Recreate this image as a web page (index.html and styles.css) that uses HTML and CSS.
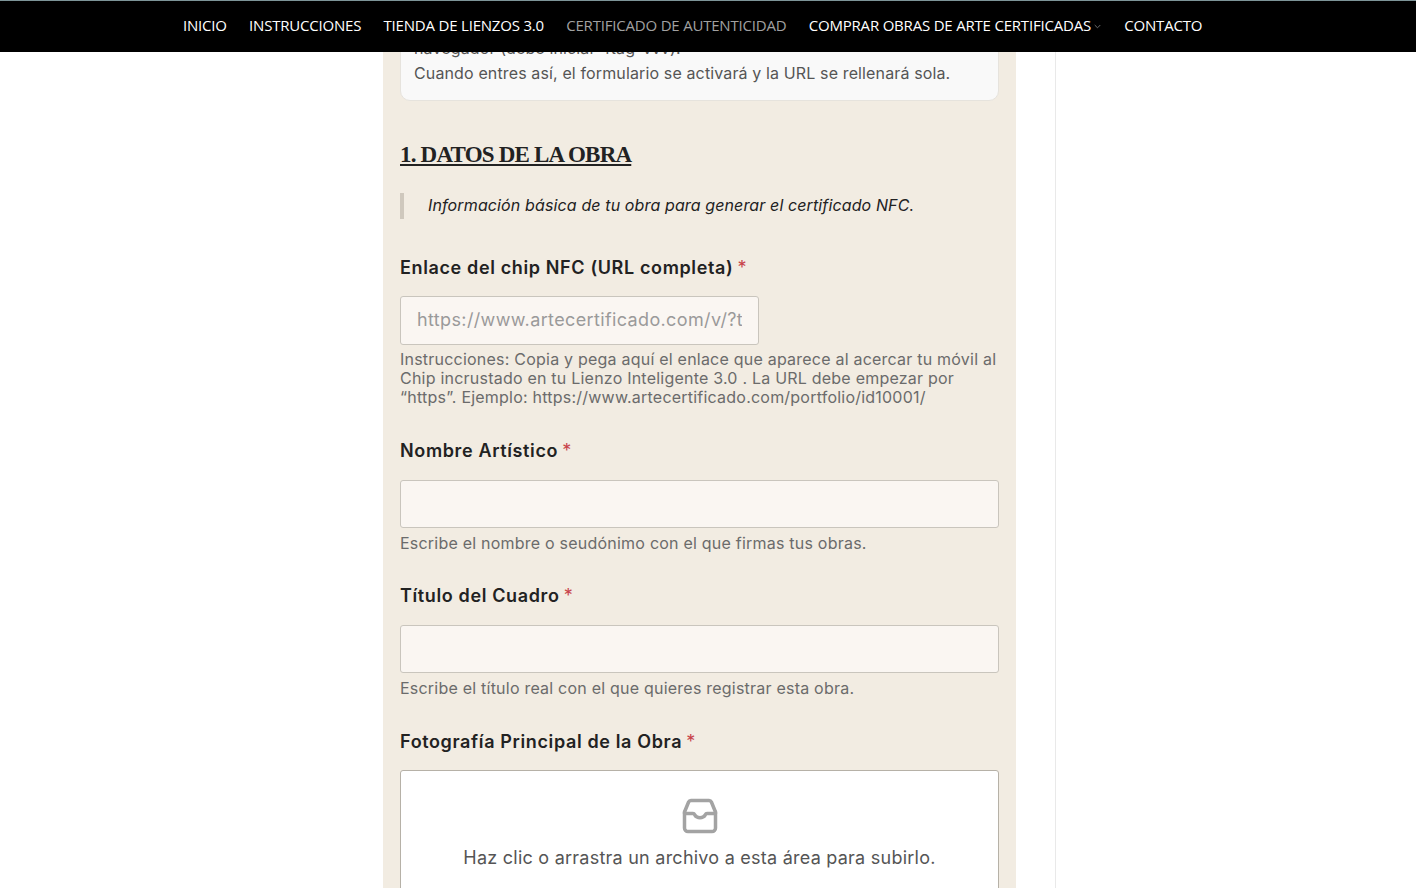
FILE: index.html
```html
<!DOCTYPE html>
<html lang="es">
<head>
<meta charset="utf-8">
<title>Certificado de autenticidad</title>
<link rel="stylesheet" href="styles.css">
</head>
<body>
<header class="topbar">
  <nav class="menu">
    <a href="#">INICIO</a>
    <a href="#">INSTRUCCIONES</a>
    <a href="#">TIENDA DE LIENZOS 3.0</a>
    <a href="#" class="current">CERTIFICADO DE AUTENTICIDAD</a>
    <a href="#" class="has-sub">COMPRAR OBRAS DE ARTE CERTIFICADAS<svg class="caret" width="7" height="5" viewBox="0 0 7 5"><path d="M.7 1l2.800 2.800L6.300 1" fill="none" stroke="#777" stroke-width=".9"/></svg></a>
    <a href="#">CONTACTO</a>
  </nav>
</header>
<div class="page">
  <main class="content">
    <div class="notice">
      <p>navegador (debe iniciar 4tag-vvv).</p>
      <p>Cuando entres así, el formulario se activará y la URL se rellenará sola.</p>
    </div>
    <h2 class="section-title">1. DATOS DE LA OBRA</h2>
    <blockquote class="lead">Información básica de tu obra para generar el certificado NFC.</blockquote>
    <form class="form">
      <div class="field first">
        <label class="label tight">Enlace del chip NFC (URL completa) <span class="req">*</span></label>
        <input class="input url" type="text" placeholder="https://www.artecertificado.com/v/?t">
        <p class="help">Instrucciones: Copia y pega aquí el enlace que aparece al acercar tu móvil al Chip incrustado en tu Lienzo Inteligente 3.0 . La URL debe empezar por “https”. Ejemplo: https://www.artecertificado.com/portfolio/id10001/</p>
      </div>
      <div class="field">
        <label class="label">Nombre Artístico <span class="req">*</span></label>
        <input class="input" type="text">
        <p class="help single">Escribe el nombre o seudónimo con el que firmas tus obras.</p>
      </div>
      <div class="field near">
        <label class="label">Título del Cuadro <span class="req">*</span></label>
        <input class="input" type="text">
        <p class="help single">Escribe el título real con el que quieres registrar esta obra.</p>
      </div>
      <div class="field">
        <label class="label tight">Fotografía Principal de la Obra <span class="req">*</span></label>
        <div class="upload">
          <svg class="upload-icon" width="36" height="36" viewBox="0 0 36 36" fill="none" stroke="#a3a3a3" stroke-width="3.500" stroke-linejoin="round" stroke-linecap="round">
            <path d="M2.500 14v16a3.500 3.500 0 0 0 3.500 3.500h24a3.500 3.500 0 0 0 3.500-3.500V14"/>
            <path d="M2.500 14L6.600 4a2.500 2.500 0 0 1 2.300-1.500h18.200a2.500 2.500 0 0 1 2.300 1.500l4.100 10"/>
            <path d="M2.500 15.500h8.500c1.500 0 1.500 1 2 1.800a5.500 4 0 0 0 10 0c.5-.8.500-1.800 2-1.800h8.500"/>
          </svg>
          <p class="upload-text">Haz clic o arrastra un archivo a esta área para subirlo.</p>
        </div>
      </div>
    </form>
  </main>
  <aside class="sidebar"></aside>
</div>
</body>
</html>
```
FILE: styles.css
```css
* { box-sizing: border-box; }
html, body { margin: 0; height: 888px; overflow: hidden; background: #fff; }
body { font-family: "Inter", "Noto Sans", sans-serif; color: #222; }

.topbar {
  position: relative;
  z-index: 2;
  height: 52px;
  background: #000;
  border-top: 1px solid #7d9498;
}
.menu {
  display: flex;
  gap: 22.300px;
  padding: 14px 0 0 183px;
  font-family: "Open Sans", sans-serif;
  font-size: 15px;
  line-height: 20px;
  letter-spacing: -0.2px;
  white-space: nowrap;
}
.menu a { color: #fff; text-decoration: none; }
.menu a.current { color: #a1a1a1; }
.caret { margin-left: 3px; margin-right: 1px; vertical-align: 2px; }

.page { display: flex; padding-left: 383px; }
.content {
  width: 633px;
  height: 900px;
  background: #f2ece2;
  padding: 0 17px;
}
.sidebar { width: 1px; margin-left: 39px; background: #e9e9e9; height: 900px; }

.notice {
  margin-top: -17px;
  height: 66px;
  padding: 0 13px;
  background: #f9f9f9;
  border: 1px solid #e6e3dd;
  border-radius: 0 0 10px 10px;
  font-size: 16px;
  line-height: 25px;
  color: #555;
}
.notice p { margin: 0; letter-spacing: 0.13px; }

.section-title {
  margin: 38px 0 0;
  font-family: "Liberation Serif", serif;
  font-size: 23px;
  line-height: 32px;
  font-weight: 700;
  letter-spacing: -0.8px;
  color: #222;
  text-decoration: underline;
  text-decoration-thickness: 2px;
  text-underline-offset: 2px;
}
.lead {
  margin: 22px 0 0;
  height: 26px;
  padding-left: 24px;
  border-left: 4px solid #cfc8bd;
  font-size: 16px;
  line-height: 25px;
  font-style: italic;
  color: #222;
  letter-spacing: 0.12px;
}

.form { margin-top: 37px; }
.field { margin-top: 32px; }
.field.first { margin-top: 0; }
.field.near { margin-top: 31px; }
.label {
  display: block;
  font-size: 18px;
  line-height: 24px;
  font-weight: 600;
  letter-spacing: 0.63px;
  color: #222;
  margin-bottom: 17px;
}
.label.tight { margin-bottom: 16px; }
.req { margin-left: -1px; color: #c8434a; font-weight: 400; font-size: 18px; letter-spacing: 0; }
.input {
  display: block;
  width: 599px;
  height: 48px;
  padding: 0 16px 2px;
  background: #faf6f2;
  border: 1px solid #c9c5bd;
  border-radius: 3px;
  font-family: inherit;
  font-size: 18px;
  letter-spacing: 0.37px;
}
.input.url { width: 359px; height: 49px; }
.input::placeholder { color: #9a9a9a; opacity: 1; }
.help {
  margin: 5px 0 0;
  font-size: 16px;
  line-height: 19px;
  letter-spacing: 0.22px;
  color: #6b6b6b;
}
.help.single { margin-top: 6px; }
.upload {
  height: 130px;
  background: #fff;
  border: 1px solid #b6b1a7;
  border-radius: 3px;
  padding-top: 27px;
  text-align: center;
}
.upload-icon { display: block; margin: 0 auto; }
.upload-text { margin: 11px 0 0; font-size: 18px; line-height: 26px; letter-spacing: 0.24px; color: #555; }
```
